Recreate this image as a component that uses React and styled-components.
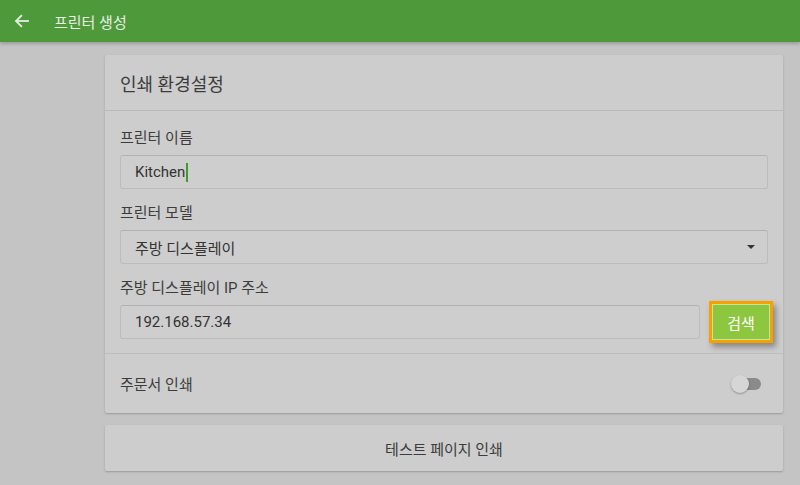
import React, { useState } from 'react';
import styled, { createGlobalStyle } from 'styled-components';

const GlobalStyle = createGlobalStyle`
  html, body {
    margin: 0;
    padding: 0;
    background: #c4c4c4;
    font-family: Roboto, "Noto Sans CJK KR", sans-serif;
  }
`;

const Page = styled.div`
  width: 800px;
  height: 485px;
  overflow: hidden;
  background: #c4c4c4;
`;

const TopBar = styled.header`
  height: 42px;
  background: #4e9a3b;
  display: flex;
  align-items: center;
  box-shadow: 0 2px 3px rgba(0, 0, 0, 0.2);
  color: #e6eee2;
`;

const BackButton = styled.button`
  width: 44px;
  height: 42px;
  display: flex;
  align-items: center;
  justify-content: center;
  background: none;
  border: none;
  padding: 0;
  color: inherit;
`;

const TopTitle = styled.h1`
  margin: 0 0 0 10px;
  font-size: 15px;
  font-weight: 400;
  color: #e6eee2;
`;

const Content = styled.main`
  margin-left: 105px;
  width: 678px;
  padding-top: 13px;
  display: flex;
  flex-direction: column;
  gap: 12px;
`;

const Card = styled.section`
  background: #cdcdcd;
  box-shadow: 0 1px 2px rgba(0, 0, 0, 0.22);
  border-radius: 2px;
`;

const CardTitle = styled.div`
  height: 55px;
  padding: 0 15px;
  display: flex;
  align-items: center;
  font-size: 18px;
  color: #3c3c3c;
  border-bottom: 1px solid #b8b8b8;
`;

const Fields = styled.div`
  padding: 16px 10px 14px 15px;
  border-bottom: 1px solid #bdbdbd;
`;

const Label = styled.div`
  height: 22px;
  line-height: 22px;
  font-size: 15px;
  color: #3c3c3c;
  margin-top: ${p => (p.$first ? '0' : '13px')};
  margin-bottom: 6px;
`;

const FieldRow = styled.div`
  display: flex;
  align-items: center;
  gap: 9px;
  padding-right: ${p => (p.$full ? '5px' : '0')};
`;

const TextBox = styled.div`
  flex: 1;
  height: 34px;
  box-sizing: border-box;
  border: 1px solid #bcbcbc;
  border-top-color: #b2b2b2;
  border-radius: 3px;
  background: #cecece;
  display: flex;
  align-items: center;
  padding: 0 14px;
  font-size: 15px;
  color: #333;
`;

const Caret = styled.span`
  display: inline-block;
  width: 2px;
  height: 19px;
  background: #3f9a2a;
  margin-left: 1px;
`;

const Arrow = styled.span`
  margin-left: auto;
  margin-right: -2px;
  width: 0;
  height: 0;
  border-left: 4px solid transparent;
  border-right: 4px solid transparent;
  border-top: 4px solid #333;
`;

const SearchButton = styled.button`
  width: 64px;
  height: 42px;
  margin: -4px 0;
  box-sizing: border-box;
  border: 3px solid #f7a000;
  background: #8dc63f;
  box-shadow: inset 0 0 0 1px #c9e59a, 3px 4px 6px rgba(0, 0, 0, 0.35);
  color: #fff;
  font-family: Roboto, "Noto Sans CJK KR", sans-serif;
  font-size: 15px;
  padding: 0;
`;

const SwitchRow = styled.div`
  height: 59px;
  padding: 0 22px 0 15px;
  display: flex;
  align-items: center;
  justify-content: space-between;
  font-size: 15px;
  color: #3c3c3c;
`;

const Track = styled.div`
  width: 30px;
  height: 18px;
  position: relative;
  display: flex;
  align-items: center;
  justify-content: flex-end;
`;

const TrackBar = styled.div`
  width: 24px;
  height: 12px;
  border-radius: 6px;
  background: #8a8a8a;
`;

const Thumb = styled.div`
  position: absolute;
  left: 0;
  top: 0;
  width: 18px;
  height: 18px;
  border-radius: 50%;
  background: #d6d6d6;
  box-shadow: 0 1px 2px rgba(0, 0, 0, 0.3);
`;

const TestButton = styled(Card)`
  height: 46px;
  display: flex;
  align-items: center;
  justify-content: center;
  font-size: 15px;
  color: #3c3c3c;
`;

export default function App() {
  const [printOrder] = useState(false);

  return (
    <Page>
      <GlobalStyle />
      <TopBar>
        <BackButton aria-label="back">
          <svg width="18" height="18" viewBox="0 0 24 24" fill="none" stroke="#e6eee2" strokeWidth="2.4" strokeLinecap="square">
            <path d="M20 12H5" />
            <path d="M11 5l-7 7 7 7" />
          </svg>
        </BackButton>
        <TopTitle>프린터 생성</TopTitle>
      </TopBar>
      <Content>
        <Card>
          <CardTitle>인쇄 환경설정</CardTitle>
          <Fields>
            <Label $first>프린터 이름</Label>
            <FieldRow $full>
              <TextBox>Kitchen<Caret /></TextBox>
            </FieldRow>
            <Label>프린터 모델</Label>
            <FieldRow $full>
              <TextBox>
                주방 디스플레이
                <Arrow />
              </TextBox>
            </FieldRow>
            <Label>주방 디스플레이 IP 주소</Label>
            <FieldRow>
              <TextBox>192.168.57.34</TextBox>
              <SearchButton>검색</SearchButton>
            </FieldRow>
          </Fields>
          <SwitchRow>
            <span>주문서 인쇄</span>
            <Track>
              <TrackBar />
              {!printOrder && <Thumb />}
            </Track>
          </SwitchRow>
        </Card>
        <TestButton as="div">테스트 페이지 인쇄</TestButton>
      </Content>
    </Page>
  );
}
